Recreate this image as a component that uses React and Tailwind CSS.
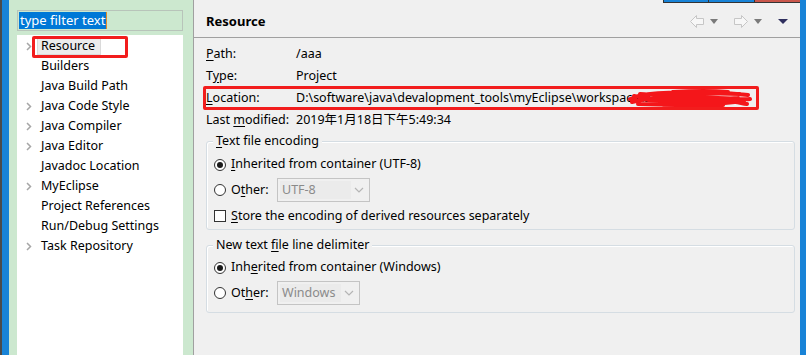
import React from 'react';

const treeItems = [
  { label: 'Resource', arrow: true, selected: true },
  { label: 'Builders' },
  { label: 'Java Build Path' },
  { label: 'Java Code Style', arrow: true },
  { label: 'Java Compiler', arrow: true },
  { label: 'Java Editor', arrow: true },
  { label: 'Javadoc Location' },
  { label: 'MyEclipse', arrow: true },
  { label: 'Project References' },
  { label: 'Run/Debug Settings' },
  { label: 'Task Repository', arrow: true },
];

function Chevron() {
  return (
    <svg width="6" height="9" viewBox="0 0 6 9" className="shrink-0">
      <path d="M1 1 L4.5 4.5 L1 8" fill="none" stroke="#a6a6a6" strokeWidth="1.5" />
    </svg>
  );
}

function Radio({ checked }) {
  return (
    <span className="w-[12px] h-[12px] rounded-full border border-[#333] bg-white flex items-center justify-center shrink-0">
      {checked && <span className="w-[6px] h-[6px] rounded-full bg-[#1a1a1a]" />}
    </span>
  );
}

function Combo({ value, width }) {
  return (
    <div className={`h-[24px] border border-[#c4c4c4] bg-[#f0f0f0] flex items-center p-[2px] ${width}`}>
      <div className="flex-1 h-full bg-[#ebebeb] text-[#8a8a8a] flex items-center pl-[2px]">{value}</div>
      <svg width="16" height="10" viewBox="0 0 16 10" className="shrink-0">
        <path d="M4 3 L8 7 L12 3" fill="none" stroke="#b5b5b5" strokeWidth="1.2" />
      </svg>
    </div>
  );
}

function NavArrow({ dir }) {
  const pts = dir === 'left'
    ? '0.5,6.5 6.5,0.5 6.5,3.5 13.5,3.5 13.5,9.5 6.5,9.5 6.5,12.5'
    : '13.5,6.5 7.5,0.5 7.5,3.5 0.5,3.5 0.5,9.5 7.5,9.5 7.5,12.5';
  return (
    <svg width="15" height="14" viewBox="0 0 15 14">
      <polygon points={pts} fill="#f7f7f7" stroke="#c6c6c6" strokeWidth="1" />
    </svg>
  );
}

function Tri({ color = '#7a7a7a', w = 8 }) {
  return (
    <svg width={w} height="5" viewBox={`0 0 ${w} 5`}>
      <polygon points={`0,0 ${w},0 ${w / 2},5`} fill={color} />
    </svg>
  );
}

function U({ children }) {
  return <span className="underline underline-offset-2">{children}</span>;
}

export default function App() {
  return (
    <div
      className="w-[806px] h-[355px] flex overflow-hidden bg-[#f0f0f0] text-[12.5px] text-black"
      style={{ fontFamily: '"Noto Sans", "Noto Sans CJK SC", sans-serif' }}
    >
      <div className="w-[2px] bg-[#4a4a4a]" />
      <div className="w-[7px] bg-[#1883d7]" />

      {/* left: filter + tree */}
      <div className="w-[184px] bg-[#cce8cf] flex flex-col pl-[8px] pr-[10px] pt-[10px]">
        <div className="h-[21px] border border-[#b8c4ba] flex items-center px-[1px]">
          <span className="bg-[#0078d7] text-white h-[17px] leading-[17px] pl-[1px] pr-[1px] text-[13px]">type filter text</span>
          <span className="w-[1px] h-[17px] bg-[#e08a2a]" />
        </div>
        <div className="flex-1 bg-white mt-[4px] pt-[1px]">
          {treeItems.map((it) => (
            <div key={it.label} className="relative h-[20px] flex items-center">
              <div className="w-[24px] flex items-center pl-[9px]">{it.arrow && <Chevron />}</div>
              {it.selected ? (
                <span className="-ml-[4px] pl-[3px] pr-[5px] h-[17px] flex items-center bg-[#ececec] border border-[#dadada]">
                  {it.label}
                </span>
              ) : (
                <span>{it.label}</span>
              )}
              {it.selected && (
                <div className="absolute left-[15px] top-[0px] w-[96px] h-[22px] border-[3px] border-[#f21d1d] rounded-[2px]" />
              )}
            </div>
          ))}
        </div>
      </div>

      <div className="w-[1px] bg-[#a0a0a0]" />

      {/* right panel */}
      <div className="flex-1 flex flex-col">
        <div className="h-[3px] flex">
          <div className="flex-1" />
          <div className="w-[46px] bg-[#1883d7] border-x border-b border-[#333]" />
          <div className="w-[46px] bg-[#1883d7] border-r border-b border-[#333]" />
          <div className="w-[45px] bg-[#c9564b] border-b border-[#333]" />
        </div>
        <div className="h-[35px] flex items-center pl-[12px] pr-[12px] border-b border-[#a0a0a0]">
          <span className="font-bold text-[13px] flex-1 mt-[4px]">Resource</span>
          <div className="flex items-center gap-[5px] mt-[3px]">
            <NavArrow dir="left" />
            <Tri />
            <span className="w-[6px]" />
            <NavArrow dir="right" />
            <Tri />
            <span className="w-[6px]" />
            <Tri color="#2f2f5e" w={10} />
          </div>
        </div>

        <div className="pl-[12px] pr-[5px] pt-[5px] flex flex-col">
          <div className="h-[22px] flex items-center">
            <span className="w-[90px]"><U>P</U>ath:</span>
            <span>/aaa</span>
          </div>
          <div className="h-[22px] flex items-center">
            <span className="w-[90px]">T<U>y</U>pe:</span>
            <span>Project</span>
          </div>
          <div className="relative h-[22px] flex items-center">
            <span className="w-[90px]"><U>L</U>ocation:</span>
            <span className="whitespace-nowrap">{'D:\\software\\java\\devalopment_tools\\myEclipse\\workspace\\aaa'}</span>
            <svg className="absolute left-[422px] top-[1px]" width="124" height="21" viewBox="0 0 124 21">
              <path
                d="M2 11 C15 6, 30 4, 50 5 S90 3, 120 7 M4 14 C30 8, 60 9, 90 10 S115 12, 122 11 M6 8 C25 12, 50 16, 80 14 S110 15, 119 16 M12 6 C40 9, 70 4, 112 6 M10 16 C40 17, 80 18, 116 13 M30 10 C50 12, 70 8, 100 12 M45 4 C60 3, 80 2, 100 4 M35 17 C55 19, 75 19, 95 17 M20 12 C50 14, 80 12, 110 10"
                fill="none" stroke="#f4161a" strokeWidth="4" strokeLinecap="round" />
            </svg>
            <div className="absolute -left-[3px] -top-[1px] w-[556px] h-[24px] border-[3px] border-[#f21d1d] rounded-[2px]" />
          </div>
          <div className="h-[22px] flex items-center">
            <span className="w-[90px]">Last <U>m</U>odified:</span>
            <span>2019年1月18日下午5:49:34</span>
          </div>

          {/* group 1 */}
          <div className="relative mt-[10px] w-[589px] h-[89px] border border-[#d5dde3] rounded-[3px] shadow-[inset_1px_1px_0_#fff] pl-[8px] pt-[10px]">
            <span className="absolute left-[6px] -top-[10px] px-[3px] bg-[#f0f0f0]"><U>T</U>ext file encoding</span>
            <div className="h-[25px] flex items-center gap-[5px] -ml-[1px]">
              <Radio checked />
              <span><U>I</U>nherited from container (UTF-8)</span>
            </div>
            <div className="h-[26px] flex items-center gap-[5px] -ml-[1px]">
              <Radio />
              <span className="w-[41px]">O<U>t</U>her:</span>
              <Combo value="UTF-8" width="w-[93px]" />
            </div>
            <div className="h-[26px] flex items-center gap-[5px] -ml-[1px]">
              <span className="w-[12px] h-[12px] border border-[#333] bg-white shrink-0" />
              <span><U>S</U>tore the encoding of derived resources separately</span>
            </div>
          </div>

          {/* group 2 */}
          <div className="relative mt-[15px] w-[589px] h-[68px] border border-[#d5dde3] rounded-[3px] shadow-[inset_1px_1px_0_#fff] pl-[8px] pt-[9px]">
            <span className="absolute left-[6px] -top-[10px] px-[3px] bg-[#f0f0f0]">New text <U>f</U>ile line delimiter</span>
            <div className="h-[25px] flex items-center gap-[5px] -ml-[1px]">
              <Radio checked />
              <span>Inh<U>e</U>rited from container (Windows)</span>
            </div>
            <div className="h-[26px] flex items-center gap-[5px] -ml-[1px]">
              <Radio />
              <span className="w-[41px]">Ot<U>h</U>er:</span>
              <Combo value="Windows" width="w-[83px]" />
            </div>
          </div>
        </div>
      </div>

      <div className="w-[6px] bg-[#1883d7]" />
    </div>
  );
}
